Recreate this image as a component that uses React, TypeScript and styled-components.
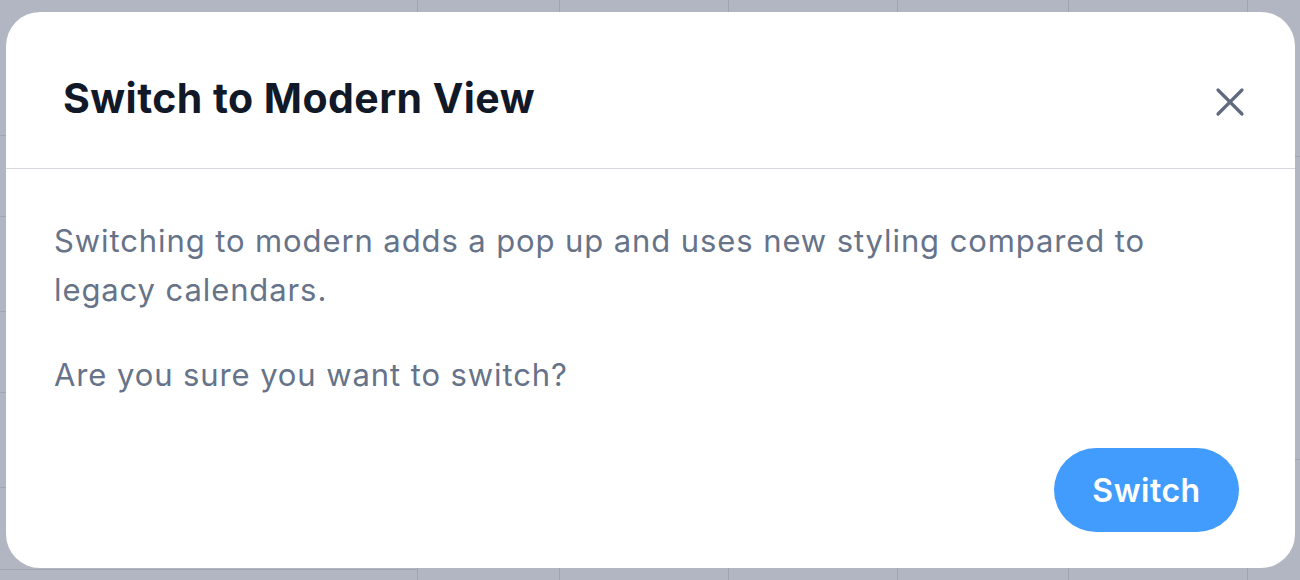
import React from "react";
import styled, { createGlobalStyle } from "styled-components";

const GlobalStyle = createGlobalStyle`
  html, body {
    margin: 0;
    padding: 0;
    background: #b2b6c2;
    font-family: Inter, "Noto Sans", "Liberation Sans", sans-serif;
  }
  * {
    box-sizing: border-box;
  }
`;

const Stage = styled.div`
  position: relative;
  width: 1300px;
  height: 580px;
  overflow: hidden;
  background: #b2b6c2;
`;

// calendar sitting behind the dialog
const CalendarBackdrop = styled.div`
  display: flex;
  height: 100%;
`;

type ColumnProps = {
  width: number;
};

const Column = styled.div<ColumnProps>`
  width: ${(props) => props.width}px;
  flex-shrink: 0;
  height: 100%;
  border-right: 1px solid #9fa4b1;
  display: flex;
  flex-direction: column;
  &:last-child {
    border-right: none;
    flex: 1;
  }
`;

type SlotProps = {
  height: number;
};

const Slot = styled.div<SlotProps>`
  height: ${(props) => props.height}px;
  flex-shrink: 0;
  border-bottom: 1px solid #a0a5b2;
`;

const Dialog = styled.div`
  position: absolute;
  top: 12px;
  left: 6px;
  width: 1289px;
  height: 556px;
  background: #ffffff;
  border-radius: 34px;
  display: flex;
  flex-direction: column;
  overflow: hidden;
`;

const Header = styled.div`
  height: 157px;
  flex-shrink: 0;
  display: flex;
  align-items: center;
  justify-content: space-between;
  padding: 16px 50px 0 57px;
  border-bottom: 1px solid #d6d8de;
`;

const Title = styled.h2`
  margin: 0;
  font-size: 41px;
  font-weight: 700;
  color: #111827;
  letter-spacing: 0.45px;
`;

const CloseButton = styled.button`
  border: none;
  background: transparent;
  padding: 0;
  margin-top: 8px;
  width: 30px;
  height: 30px;
  display: flex;
  align-items: center;
  justify-content: center;
  cursor: pointer;
`;

const Body = styled.div`
  flex: 1;
  display: flex;
  flex-direction: column;
  padding: 47px 56px 36px 48px;
`;

const Paragraph = styled.p`
  margin: 0 0 36px 0;
  font-size: 31px;
  line-height: 49px;
  font-weight: 400;
  letter-spacing: 0.9px;
  color: #667389;
  &:last-of-type {
    margin-bottom: 0;
  }
`;

const Footer = styled.div`
  margin-top: auto;
  display: flex;
  justify-content: flex-end;
`;

const PrimaryButton = styled.button`
  height: 84px;
  width: 185px;
  border: none;
  border-radius: 42px;
  background: #429cfd;
  color: #ffffff;
  font-family: inherit;
  font-size: 32px;
  font-weight: 600;
  letter-spacing: 0.5px;
  cursor: pointer;
`;

const CloseIcon = () => (
  <svg width="30" height="30" viewBox="0 0 30 30" fill="none">
    <path
      d="M3 3 L27 27 M27 3 L3 27"
      stroke="#5f6a7f"
      strokeWidth="3.2"
      strokeLinecap="round"
    />
  </svg>
);

const columns = [
  { width: 418, slots: [136, 81, 95, 81, 95, 82] },
  { width: 142, slots: [] },
  { width: 169, slots: [] },
  { width: 169, slots: [] },
  { width: 171, slots: [] },
  { width: 179, slots: [] },
  { width: 52, slots: [157, 303] },
];

export default function App() {
  return (
    <>
      <GlobalStyle />
      <Stage>
        <CalendarBackdrop>
          {columns.map((col, i) => (
            <Column key={i} width={col.width}>
              {col.slots.map((h, j) => (
                <Slot key={j} height={h} />
              ))}
            </Column>
          ))}
        </CalendarBackdrop>
        <Dialog role="dialog">
          <Header>
            <Title>Switch to Modern View</Title>
            <CloseButton aria-label="Close">
              <CloseIcon />
            </CloseButton>
          </Header>
          <Body>
            <Paragraph>
              Switching to modern adds a pop up and uses new styling compared
              to legacy calendars.
            </Paragraph>
            <Paragraph>Are you sure you want to switch?</Paragraph>
            <Footer>
              <PrimaryButton>Switch</PrimaryButton>
            </Footer>
          </Body>
        </Dialog>
      </Stage>
    </>
  );
}
